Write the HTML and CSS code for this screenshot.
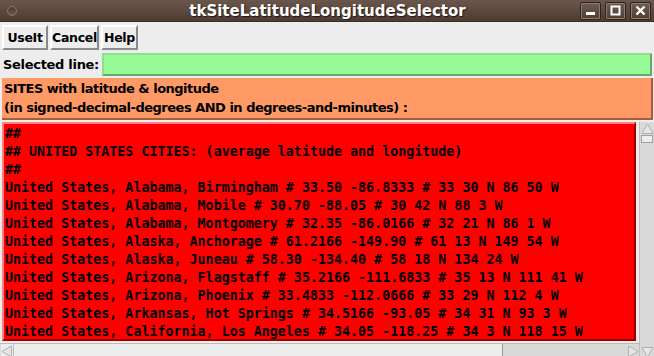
FILE: index.html
```html
<!DOCTYPE html>
<html lang="en">
<head>
    <meta charset="UTF-8">
    <title>tkSiteLatitudeLongitudeSelector</title>
    <link rel="stylesheet" href="styles.css">
</head>
<body>
    <div class="titlebar">
        <div class="win-dot"></div>
        <div class="win-title">tkSiteLatitudeLongitudeSelector</div>
        <div class="win-buttons">
            <div class="win-btn">
                <svg width="11" height="11" viewBox="0 0 11 11"><rect x="1" y="7" width="9" height="3" fill="#fff"/></svg>
            </div>
            <div class="win-btn">
                <svg width="11" height="11" viewBox="0 0 11 11"><rect x="1.5" y="1.5" width="8" height="8" fill="none" stroke="#fff" stroke-width="2"/></svg>
            </div>
            <div class="win-btn">
                <svg width="11" height="11" viewBox="0 0 11 11"><path d="M1.5 1.5 L9.5 9.5 M9.5 1.5 L1.5 9.5" stroke="#fff" stroke-width="2.4"/></svg>
            </div>
        </div>
    </div>

    <div class="toolbar">
        <button class="tkbtn btn-useit">UseIt</button>
        <button class="tkbtn btn-cancel">Cancel</button>
        <button class="tkbtn btn-help">Help</button>
    </div>

    <div class="entry-row">
        <label class="entry-label" for="selline">Selected line:</label>
        <input class="entry" id="selline" type="text">
    </div>

    <div class="header">SITES with latitude &amp; longitude
(in signed-decimal-degrees AND in degrees-and-minutes) :</div>

    <div class="list-area">
        <div class="list-row">
            <div class="listbox">##
## UNITED STATES CITIES: (average latitude and longitude)
##
United States, Alabama, Birmingham # 33.50 -86.8333 # 33 30 N 86 50 W
United States, Alabama, Mobile # 30.70 -88.05 # 30 42 N 88 3 W
United States, Alabama, Montgomery # 32.35 -86.0166 # 32 21 N 86 1 W
United States, Alaska, Anchorage # 61.2166 -149.90 # 61 13 N 149 54 W
United States, Alaska, Juneau # 58.30 -134.40 # 58 18 N 134 24 W
United States, Arizona, Flagstaff # 35.2166 -111.6833 # 35 13 N 111 41 W
United States, Arizona, Phoenix # 33.4833 -112.0666 # 33 29 N 112 4 W
United States, Arkansas, Hot Springs # 34.5166 -93.05 # 34 31 N 93 3 W
United States, California, Los Angeles # 34.05 -118.25 # 34 3 N 118 15 W</div>
            <div class="hscroll">
                <div class="arrow">
                    <svg width="12" height="13" viewBox="0 0 12 13"><path d="M10.5 1 L1 6.5 L10.5 12 Z" fill="#e6e6e6" stroke="#b0b0b0"/></svg>
                </div>
                <div class="hthumb"></div>
                <div class="htrough"></div>
                <div class="arrow">
                    <svg width="12" height="13" viewBox="0 0 12 13"><path d="M1.5 1 L11 6.5 L1.5 12 Z" fill="#e6e6e6" stroke="#b0b0b0"/></svg>
                </div>
            </div>
        </div>
        <div class="vscroll">
            <div class="arrow">
                <svg width="13" height="12" viewBox="0 0 13 12"><path d="M1 10.5 L6.5 1 L12 10.5 Z" fill="#e6e6e6" stroke="#b0b0b0"/></svg>
            </div>
            <div class="vthumb"></div>
            <div class="vtrough"></div>
            <div class="arrow">
                <svg width="13" height="12" viewBox="0 0 13 12"><path d="M1 1.5 L6.5 11 L12 1.5 Z" fill="#e6e6e6" stroke="#b0b0b0"/></svg>
            </div>
        </div>
    </div>
</body>
</html>
```

FILE: styles.css
```css
body {
    margin: 0;
    background-color: #ededed;
    width: 654px;
    height: 356px;
    overflow: hidden;
}

/* window manager title bar */
.titlebar {
    height: 21px;
    display: flex;
    align-items: center;
    background: linear-gradient(#6b564b, #4d3c33);
    border-bottom: 1px solid #3a2d26;
}

.win-dot {
    width: 8px;
    height: 8px;
    margin-left: 7px;
    border-radius: 50%;
    border: 1px solid #8a7a70;
    background: linear-gradient(#4a3a31, #6b5a50);
}

.win-title {
    flex: 1;
    text-align: center;
    color: #ffffff;
    font-family: "DejaVu Sans", sans-serif;
    font-weight: bold;
    font-size: 15px;
    text-shadow: 1px 1px 1px #1e1612;
    padding-left: 58px;
}

.win-buttons {
    display: flex;
    gap: 4px;
    margin-right: 3px;
}

.win-btn {
    width: 19px;
    height: 16px;
    border: 1px solid #2e231d;
    box-shadow: inset 0 0 0 1px #8d7b70;
    border-radius: 2px;
    background: linear-gradient(#6f5b50, #4f3e35);
    display: flex;
    align-items: center;
    justify-content: center;
}

/* tk widgets */
.toolbar {
    display: flex;
    gap: 2px;
    padding: 3px 2px 0 2px;
}

.tkbtn {
    font-family: "DejaVu Sans", sans-serif;
    font-size: 12.5px;
    font-weight: bold;
    color: #000;
    height: 25px;
    padding: 0;
    background-color: #ededed;
    border: 2px solid;
    border-color: #ffffff #8a8a8a #8a8a8a #ffffff;
    border-radius: 0;
    letter-spacing: -0.3px;
}

.btn-useit {
    width: 46px;
}

.btn-cancel {
    width: 49px;
}

.btn-help {
    width: 37px;
}

.entry-row {
    display: flex;
    align-items: center;
    padding: 2px 2px 0 2px;
    height: 24px;
}

.entry-label {
    font-family: "DejaVu Sans", sans-serif;
    font-size: 13px;
    font-weight: bold;
    letter-spacing: -0.3px;
    width: 99px;
    padding-left: 1px;
}

.entry {
    flex: 1;
    height: 23px;
    box-sizing: border-box;
    margin: 0;
    background-color: #98fb98;
    border: 2px solid;
    border-color: #8fdf8f #6aa86a #6aa86a #8fdf8f;
    outline: none;
}

.header {
    margin: 2px 1px 0 2px;
    height: 42px;
    box-sizing: border-box;
    background-color: #ff9966;
    border-right: 2px solid #a35e3c;
    border-bottom: 2px solid #a35e3c;
    padding: 1px 2px 0 2px;
    font-family: "DejaVu Sans", sans-serif;
    font-size: 13px;
    font-weight: bold;
    letter-spacing: -0.5px;
    line-height: 19px;
    white-space: pre;
}

.list-area {
    display: flex;
    margin-top: 2px;
    height: 236px;
}

.list-row {
    display: flex;
    flex-direction: column;
    width: 640px;
}

.listbox {
    margin-left: 2px;
    margin-right: 3px;
    height: 220px;
    box-sizing: border-box;
    background-color: #ff0000;
    border: 2px solid;
    border-color: #ff8080 #a00000 #a00000 #ff8080;
    padding: 1px 0 0 1px;
    font-family: "DejaVu Sans Mono", monospace;
    font-weight: bold;
    font-size: 13.33px;
    line-height: 18px;
    white-space: pre;
    overflow: hidden;
    color: #000;
}

.hscroll {
    margin-top: 2px;
    height: 14px;
    display: flex;
    border-top: 1px solid #bdbdbd;
    background-color: #d9d9d9;
}

.hscroll .arrow {
    width: 12px;
    display: flex;
    align-items: center;
    justify-content: center;
}

.hscroll .arrow:first-child {
    margin-left: 1px;
    background-color: #ededed;
}

.hthumb {
    width: 488px;
    background-color: #ededed;
    border-left: 1px solid #bdbdbd;
    border-right: 1px solid #9a9a9a;
}

.htrough {
    flex: 1;
}

.vscroll {
    width: 14px;
    display: flex;
    flex-direction: column;
    background-color: #d9d9d9;
    border-left: 1px solid #bdbdbd;
}

.vscroll .arrow {
    height: 13px;
    display: flex;
    align-items: center;
    justify-content: center;
}

.vthumb {
    height: 6px;
    margin: 0 1px;
    background-color: #ededed;
    border: 1px solid #a0a0a0;
}

.vtrough {
    flex: 1;
}
```
